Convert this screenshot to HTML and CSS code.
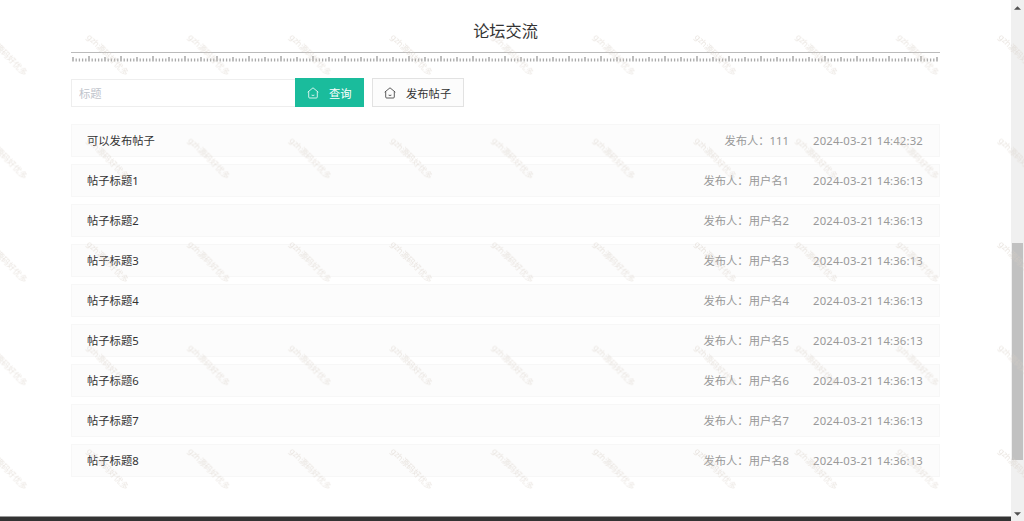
FILE: index.html
```html
<!DOCTYPE html>
<html lang="zh-CN">
<head>
  <meta charset="UTF-8">
  <meta name="viewport" content="width=device-width, initial-scale=1.0">
  <title>论坛交流</title>
  <link rel="stylesheet" href="styles.css">
</head>
<body>

<div class="layout">
  <div class="page">
    <main class="container">
      <h1 class="title">论坛交流</h1>
      <svg class="ruler" width="869" height="12" aria-hidden="true">
        <defs>
          <pattern id="ticks" x="1" width="32" height="12" patternUnits="userSpaceOnUse">
            <path stroke="#999" stroke-width="1.3" d="M1 5v4.500M17 4v5.500"/>
            <path stroke="#aaa" stroke-width="1.3" d="M4.200 6.500v3M7.400 6.500v3M10.600 6.500v3M13.800 6.500v3M20.200 6.500v3M23.400 6.500v3M26.600 6.500v3M29.800 6.500v3"/>
          </pattern>
        </defs>
        <path stroke="#bbb" stroke-width="1.2" d="M0 .5h869"/>
        <rect x="1" y="3" width="867" height="9" fill="url(#ticks)"/>
      </svg>

      <form class="search" onsubmit="return false">
        <input type="text" class="search-input" placeholder="标题">
        <button type="submit" class="btn btn-primary">
          <svg class="icon" viewBox="0 0 12 12"><path d="M.7 5.200 6 .8l5.300 4.400M1.700 4.600V10q0 1 1 1h6.600q1 0 1-1V4.600M4.600 8.100q1.400.8 2.800 0"/></svg>
          <span>查询</span>
        </button>
        <button type="button" class="btn btn-plain">
          <svg class="icon" viewBox="0 0 12 12"><path d="M.7 5.200 6 .8l5.300 4.400M1.700 4.600V10q0 1 1 1h6.600q1 0 1-1V4.600M4.600 8.100q1.400.8 2.800 0"/></svg>
          <span>发布帖子</span>
        </button>
      </form>

      <ul class="list">
        <li><a class="name">可以发布帖子</a><span class="user">发布人：111</span><span class="time">2024-03-21 14:42:32</span></li>
        <li><a class="name">帖子标题1</a><span class="user">发布人：用户名1</span><span class="time">2024-03-21 14:36:13</span></li>
        <li><a class="name">帖子标题2</a><span class="user">发布人：用户名2</span><span class="time">2024-03-21 14:36:13</span></li>
        <li><a class="name">帖子标题3</a><span class="user">发布人：用户名3</span><span class="time">2024-03-21 14:36:13</span></li>
        <li><a class="name">帖子标题4</a><span class="user">发布人：用户名4</span><span class="time">2024-03-21 14:36:13</span></li>
        <li><a class="name">帖子标题5</a><span class="user">发布人：用户名5</span><span class="time">2024-03-21 14:36:13</span></li>
        <li><a class="name">帖子标题6</a><span class="user">发布人：用户名6</span><span class="time">2024-03-21 14:36:13</span></li>
        <li><a class="name">帖子标题7</a><span class="user">发布人：用户名7</span><span class="time">2024-03-21 14:36:13</span></li>
        <li><a class="name">帖子标题8</a><span class="user">发布人：用户名8</span><span class="time">2024-03-21 14:36:13</span></li>
      </ul>
    </main>
    <footer class="footer"></footer>
  </div>

  <div class="scrollbar">
    <svg class="arrow" viewBox="0 0 8 4"><path d="M0 4 4 0l4 4z"/></svg>
    <div class="thumb"></div>
    <svg class="arrow" viewBox="0 0 8 4"><path d="M0 0h8L4 4z"/></svg>
  </div>
</div>

<svg class="watermark" aria-hidden="true">
  <defs>
    <pattern id="mark" x="-22" y="28" width="101.3" height="103.5" patternUnits="userSpaceOnUse">
      <text class="mark-text" transform="translate(7 9.5) rotate(45)">gzh源码好优多</text>
    </pattern>
  </defs>
  <rect width="1024" height="492" fill="url(#mark)"/>
</svg>

</body>
</html>
```

FILE: styles.css
```css
* { box-sizing: border-box; }
body { margin: 0; background: #fff; color: #333; font-family: "Noto Sans", "Noto Sans CJK SC", sans-serif; font-size: 11.3px; overflow: hidden; }
.layout { display: flex; height: 521px; }
.page { flex: 1; display: flex; flex-direction: column; }
.container { width: 869px; margin: 0 auto; flex: 1; }
.title { margin: 0; padding-top: 20px; height: 52px; font-size: 16.2px; line-height: 22px; font-weight: 400; text-align: center; }
.ruler { display: block; }

.search { display: flex; align-items: flex-end; height: 29px; margin-top: 14px; }
.search-input { width: 224px; height: 28px; padding: 0 8px 0 7px; border: 1px solid #eee; border-right: 0; background: #fff; font: inherit; outline: none; }
.search-input::placeholder { color: #c0c4cc; }
.btn { display: flex; align-items: center; height: 29px; padding: 0 12px; border: 0; font: inherit; white-space: nowrap; }
.btn-primary { width: 69px; background: #1abc9c; color: #fff; }
.btn-plain { width: 92px; margin-left: 8px; padding: 0 11px; border: 1px solid #e2e2e2; background: #fcfcfc; color: #333; }
.icon { width: 12px; height: 12px; margin-right: 10px; fill: none; stroke: currentColor; stroke-width: .8; flex: none; }

.list { list-style: none; margin: 17px 0 0; padding: 0; }
.list li { display: flex; align-items: center; height: 33px; margin-bottom: 7px; padding: 0 15px; border: 1px solid #f7f7f7; background: #fcfcfc; }
.name { flex: 1; }
.name, .user { padding-bottom: 1px; }
.user, .time { color: #999; }
.time { width: 111px; margin-left: 24px; letter-spacing: .17px; white-space: nowrap; }

.footer { height: 5px; background: #333; border-top: 1px solid #999; }

.scrollbar { width: 13px; padding: 6px 0 5px; background: #f0f0f0; display: flex; flex-direction: column; align-items: center; justify-content: space-between; }
.thumb { width: 11px; height: 217px; margin-top: 233px; margin-bottom: auto; background: #c1c1c1; }
.arrow { width: 7px; height: 4px; fill: #505050; flex: none; }

/* repeated diagonal mark laid over the page */
.watermark { position: absolute; top: 0; left: 0; width: 1024px; height: 521px; pointer-events: none; }
.mark-text { font-size: 8.2px; fill: #d6cdc4; fill-opacity: .55; }
```
